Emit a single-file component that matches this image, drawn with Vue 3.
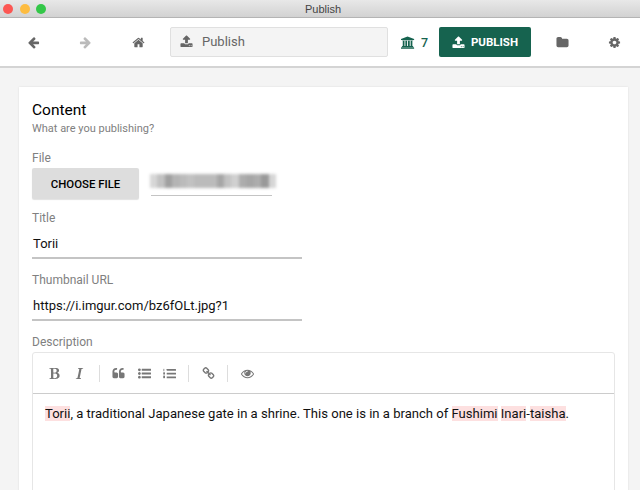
<template>
  <div class="window">
    <div class="titlebar">
      <div class="lights">
        <span class="light red"></span>
        <span class="light yellow"></span>
        <span class="light green"></span>
      </div>
      <span class="window-title">Publish</span>
    </div>

    <header class="toolbar">
      <button class="nav-btn">
        <svg class="icon" viewBox="0 0 1792 1792"><path :d="icons.left" /></svg>
      </button>
      <button class="nav-btn faded">
        <svg class="icon" viewBox="0 0 1792 1792"><path :d="icons.right" /></svg>
      </button>
      <button class="nav-btn">
        <svg class="icon" viewBox="0 0 1792 1792"><path :d="icons.home" /></svg>
      </button>
      <div class="address">
        <svg class="icon" viewBox="0 0 1792 1792"><path :d="icons.upload" /></svg>
        <span>Publish</span>
      </div>
      <div class="credits">
        <svg class="bank" viewBox="0 0 2048 1792"><path :d="icons.bank" /></svg>
        <span>7</span>
      </div>
      <button class="publish-btn">
        <svg class="icon" viewBox="0 0 1792 1792"><path :d="icons.upload" /></svg>
        <span>PUBLISH</span>
      </button>
      <button class="nav-btn folder">
        <svg class="icon" viewBox="0 0 1792 1792"><path :d="icons.folder" /></svg>
      </button>
      <button class="nav-btn settings">
        <svg class="icon" viewBox="0 0 1792 1792"><path :d="icons.cog" /></svg>
      </button>
    </header>

    <main class="page">
      <section class="card">
        <h2>Content</h2>
        <p class="subtitle">What are you publishing?</p>

        <label class="label file-label">File</label>
        <div class="file-row">
          <button class="choose-btn">CHOOSE FILE</button>
          <div class="file-name">
            <div class="blur-row">
              <i v-for="(o, n) in blurCells" :key="n" :style="{ opacity: o }"></i>
            </div>
          </div>
        </div>

        <label class="label">Title</label>
        <div class="input">Torii</div>

        <label class="label">Thumbnail URL</label>
        <div class="input">https://i.imgur.com/bz6fOLt.jpg?1</div>

        <label class="label">Description</label>
        <div class="editor">
          <div class="editor-tools">
            <svg class="tool" viewBox="0 0 1792 1792"><path :d="icons.bold" /></svg>
            <svg class="tool" viewBox="0 0 1792 1792"><path :d="icons.italic" /></svg>
            <span class="sep"></span>
            <svg class="tool" viewBox="0 0 1792 1792"><path :d="icons.quote" /></svg>
            <svg class="tool" viewBox="0 0 1792 1792"><path :d="icons.ul" /></svg>
            <svg class="tool" viewBox="0 0 1792 1792">
              <rect x="64" y="256" width="110" height="330" />
              <rect x="32" y="736" width="240" height="300" />
              <rect x="32" y="1190" width="240" height="350" />
              <rect x="512" y="288" width="1280" height="224" rx="30" />
              <rect x="512" y="800" width="1280" height="224" rx="30" />
              <rect x="512" y="1312" width="1280" height="224" rx="30" />
            </svg>
            <span class="sep"></span>
            <svg class="tool" viewBox="0 0 1792 1792"><path :d="icons.link" /></svg>
            <span class="sep"></span>
            <svg class="tool" viewBox="0 0 1792 1792"><path :d="icons.eye" /></svg>
          </div>
          <div class="editor-body">
            <mark>Torii</mark>, a traditional Japanese gate in a shrine. This one is in a branch of
            <mark>Fushimi</mark> <mark>Inari</mark>-<mark>taisha</mark>.
          </div>
        </div>
      </section>
    </main>
  </div>
</template>

<script setup>
const blurCells = [
  0.3, 0.45, 0.7, 0.55, 0.5, 0.45, 0.5, 0.5, 0.5, 0.65, 0.45, 0.35, 0.6, 0.65, 0.6, 0.75, 0.3,
];

const icons = {
  left: "M1664 896v128q0 53-32.500 90.500t-84.500 37.500h-704l293 294q38 36 38 90t-38 90l-75 76q-37 37-90 37-52 0-91-37l-651-652q-37-37-37-90 0-52 37-91l651-650q38-38 91-38 52 0 90 38l75 74q38 38 38 91t-38 91l-293 293h704q52 0 84.500 37.500t32.500 90.500z",
  right: "M1600 960q0 54-37 91l-651 651q-39 37-91 37-51 0-90-37l-75-75q-38-38-38-91t38-91l293-293h-704q-52 0-84.500-37.500t-32.500-90.500v-128q0-53 32.500-90.500t84.500-37.500h704l-293-294q-38-36-38-90t38-90l75-75q38-38 90-38 53 0 91 38l651 651q37 35 37 90z",
  home: "M1472 992v480q0 26-19 45t-45 19h-384v-384h-256v384h-384q-26 0-45-19t-19-45v-480q0-1 .5-3t.5-3l575-474 575 474q1 2 1 6zm223-69l-62 74q-8 9-21 11h-3q-13 0-21-7l-692-577-692 577q-12 8-24 7-13-2-21-11l-62-74q-8-10-7-23.500t11-21.500l719-599q32-26 76-26t76 26l244 204v-195q0-14 9-23t23-9h192q14 0 23 9t9 23v408l219 182q10 8 11 21.500t-7 23.500z",
  upload: "M1344 1472q0-26-19-45t-45-19-45 19-19 45 19 45 45 19 45-19 19-45zm256 0q0-26-19-45t-45-19-45 19-19 45 19 45 45 19 45-19 19-45zm128-224v320q0 40-28 68t-68 28h-1472q-40 0-68-28t-28-68v-320q0-40 28-68t68-28h427q21 56 70.500 92t110.500 36h256q61 0 110.500-36t70.500-92h427q40 0 68 28t28 68zm-325-648q-17 40-59 40h-256v448q0 26-19 45t-45 19h-256q-26 0-45-19t-19-45v-448h-256q-42 0-59-40-17-39 14-69l448-448q18-19 45-19t45 19l448 448q31 30 14 69z",
  bank: "M960 0l960 384v128h-128q0 26-20.500 45t-48.500 19h-1526q-28 0-48.500-19t-20.500-45h-128v-128zm-704 640h256v768h128v-768h256v768h128v-768h256v768h128v-768h256v768h59q28 0 48.500 19t20.500 45v64h-1664v-64q0-26 20.500-45t48.500-19h59v-768zm1595 960q28 0 48.500 19t20.500 45v128h-1920v-128q0-26 20.500-45t48.500-19h1782z",
  folder: "M1728 608v704q0 92-66 158t-158 66h-1216q-92 0-158-66t-66-158v-960q0-92 66-158t158-66h320q92 0 158 66t66 158v32h672q92 0 158 66t66 158z",
  cog: "M1152 896q0-106-75-181t-181-75-181 75-75 181 75 181 181 75 181-75 75-181zm512-109v222q0 12-8 23t-20 13l-185 28q-19 54-39 91 35 50 107 138 10 12 10 25t-9 23q-27 37-99 108t-94 71q-12 0-26-9l-138-108q-44 23-91 38-16 136-29 186-7 28-36 28h-222q-14 0-24.500-8.500t-11.500-21.500l-28-184q-49-16-90-37l-141 107q-10 9-25 9-14 0-25-11-126-114-165-168-7-10-7-23 0-12 8-23 15-21 51-66.500t54-70.500q-27-50-41-99l-183-27q-13-2-21-12.500t-8-23.500v-222q0-12 8-23t19-13l186-28q14-46 39-92-40-57-107-138-10-12-10-24 0-10 9-23 26-36 98.500-107.500t94.500-71.500q13 0 26 10l138 107q44-23 91-38 16-136 29-186 7-28 36-28h222q14 0 24.500 8.500t11.500 21.500l28 184q49 16 90 37l142-107q9-9 24-9 13 0 25 10 129 119 165 170 7 8 7 22 0 12-8 23-15 21-51 66.500t-54 70.500q26 50 41 98l183 28q13 2 21 12.500t8 23.500z",
  bold: "M747 1521q74 32 140 32 376 0 376-335 0-114-41-180-27-44-61.500-74t-67.500-46.500-80.500-25-84-10.500-94.500-2q-73 0-101 10 0 53-.5 159t-.5 158q0 8-1 67.500t-.5 96.500 4.500 83.500 12 66.500zm-14-746q42 7 109 7 82 0 143-13t110-44.500 74.500-89.500 25.500-142q0-70-29-122.500t-79-82-108-43.500-124-14q-50 0-130 13 0 50 4 151t4 152q0 27-.5 80t-.5 79q0 46 1 69zm-541 889l2-94q15-4 85-16t106-27q7-12 12.500-27t8.500-33.500 5.500-32.500 3-37.500.5-34v-65.500q0-982-22-1025-4-8-22-14.500t-44.500-11-49.500-7-48.500-4.500-30.500-3l-4-83q98-2 340-11.500t373-9.500q23 0 68 .5t68 .5q70 0 136.500 13t128.500 42 108 71 74 104.500 28 137.500q0 52-16.500 95.500t-39 72-64.500 57.500-73 45-84 40q154 35 256.500 134t102.500 248q0 100-35 179.500t-93.500 130.500-138 85.500-163.500 48.500-176 14q-44 0-132-3t-132-3q-106 0-307 11t-231 12z",
  italic: "M384 1662l17-85q6-2 81.500-21.500t111.500-37.500q28-35 41-101 1-7 62-289t114-543.500 52-296.500v-25q-24-13-54.500-18.500t-69.500-8-58-5.500l19-103q33 2 120 6.500t149.500 7 120.500 2.500q48 0 98.500-2.500t121-7 98.500-6.500q-5 39-19 89-30 10-101.500 28.500t-108.500 33.500q-8 19-14 42.500t-9 40-7.500 45.500-6.500 42q-27 148-87.500 419.500t-77.500 355.500q-2 9-13 58t-20 90-16 83.500-6 57.500l1 18q17 4 185 31-3 44-16 99-11 0-32.500 1.500t-32.500 1.500q-29 0-87-10t-86-10q-138-2-206-2-51 0-143 9t-121 11z",
  quote: "M832 960v384q0 80-56 136t-136 56h-384q-80 0-136-56t-56-136v-704q0-104 40.500-198.500t109.500-163.500 163.500-109.500 198.500-40.500h64q26 0 45 19t19 45v128q0 26-19 45t-45 19h-64q-106 0-181 75t-75 181v32q0 40 28 68t68 28h224q80 0 136 56t56 136zm896 0v384q0 80-56 136t-136 56h-384q-80 0-136-56t-56-136v-704q0-104 40.500-198.500t109.500-163.500 163.500-109.500 198.500-40.500h64q26 0 45 19t19 45v128q0 26-19 45t-45 19h-64q-106 0-181 75t-75 181v32q0 40 28 68t68 28h224q80 0 136 56t56 136z",
  ul: "M384 1408q0 80-56 136t-136 56-136-56-56-136 56-136 136-56 136 56 56 136zm0-512q0 80-56 136t-136 56-136-56-56-136 56-136 136-56 136 56 56 136zm1408 416v192q0 13-9.500 22.500t-22.500 9.500h-1216q-13 0-22.500-9.500t-9.500-22.500v-192q0-13 9.500-22.500t22.500-9.500h1216q13 0 22.500 9.500t9.500 22.500zm-1408-928q0 80-56 136t-136 56-136-56-56-136 56-136 136-56 136 56 56 136zm1408 416v192q0 13-9.500 22.500t-22.500 9.500h-1216q-13 0-22.500-9.500t-9.500-22.500v-192q0-13 9.500-22.500t22.500-9.500h1216q13 0 22.500 9.500t9.500 22.500zm0-512v192q0 13-9.500 22.500t-22.500 9.500h-1216q-13 0-22.500-9.500t-9.500-22.500v-192q0-13 9.500-22.500t22.500-9.500h1216q13 0 22.500 9.500t9.500 22.500z",
  link: "M1520 1216q0-40-28-68l-208-208q-28-28-68-28-42 0-72 32 3 3 19 18.500t21.500 21.500 15 19 13 25.500 3.500 27.500q0 40-28 68t-68 28q-15 0-27.500-3.500t-25.500-13-19-15-21.500-21.500-18.500-19q-33 31-33 73 0 40 28 68l206 207q27 27 68 27 40 0 68-26l147-146q28-28 28-67zm-703-705q0-40-28-68l-206-207q-28-28-68-28-39 0-68 27l-147 146q-28 28-28 67 0 40 28 68l208 208q27 27 68 27 42 0 72-31-3-3-19-18.500t-21.500-21.500-15-19-13-25.500-3.500-27.500q0-40 28-68t68-28q15 0 27.500 3.500t25.500 13 19 15 21.500 21.500 18.500 19q33-31 33-73zm895 705q0 120-85 203l-147 146q-83 83-203 83-121 0-204-85l-206-207q-83-83-83-203 0-123 88-209l-88-88q-86 88-208 88-120 0-204-84l-208-208q-84-84-84-204t85-203l147-146q83-83 203-83 121 0 204 85l206 207q83 83 83 203 0 123-88 209l88 88q86-88 208-88 120 0 204 84l208 208q84 84 84 204z",
  eye: "M1664 960q-152-236-381-353 61 104 61 225 0 185-131.500 316.500t-316.500 131.500-316.500-131.500-131.500-316.500q0-121 61-225-229 117-381 353 133 205 333.500 326.500t434.500 121.500 434.500-121.500 333.500-326.500zm-720-384q0-20-14-34t-34-14q-125 0-214.500 89.500t-89.500 214.500q0 20 14 34t34 14 34-14 14-34q0-86 61-147t147-61q20 0 34-14t14-34zm848 384q0 34-20 69-140 230-376.500 368.500t-499.500 138.500-499.500-139-376.500-368q-20-35-20-69t20-69q140-229 376.500-368t499.500-139 499.500 139 376.500 368q20 35 20 69z",
};
</script>

<style>
html,
body {
  margin: 0;
  height: 490px;
  overflow: hidden;
}
</style>

<style scoped>
* {
  box-sizing: border-box;
}

.window {
  width: 640px;
  height: 490px;
  overflow: hidden;
  display: flex;
  flex-direction: column;
  background: #f4f4f4;
  font-family: Roboto, sans-serif;
  color: #000;
}

.titlebar {
  position: relative;
  height: 18px;
  flex: none;
  display: flex;
  align-items: center;
  justify-content: center;
  padding-left: 6px;
  background: linear-gradient(#e8e8e8, #d2d2d2);
  border-bottom: 1px solid #b4b4b4;
}

.lights {
  position: absolute;
  left: 3px;
  top: 4px;
  display: flex;
  gap: 6.5px;
}

.light {
  width: 10px;
  height: 10px;
  border-radius: 50%;
}

.red {
  background: #fc5753;
}

.yellow {
  background: #fdbc40;
}

.green {
  background: #33c748;
}

.window-title {
  font-family: "Liberation Sans", sans-serif;
  font-size: 11px;
  color: #444;
}

.toolbar {
  height: 50px;
  flex: none;
  display: flex;
  align-items: center;
  padding-left: 7px;
  background: #fff;
  border-bottom: 2px solid #d4d4d4;
}

button {
  border: 0;
  padding: 0;
  background: none;
  font-family: inherit;
}

.nav-btn {
  width: 52.5px;
  height: 30px;
  flex: none;
  display: flex;
  align-items: center;
  justify-content: center;
  color: #666;
}

.settings {
  width: 51px;
}

.faded {
  color: #bbb;
}

.icon {
  width: 13px;
  height: 13px;
  fill: currentColor;
  flex: none;
}

.address {
  width: 218px;
  height: 30px;
  flex: none;
  margin-left: 5.5px;
  padding: 0 0 1px 9px;
  display: flex;
  align-items: center;
  gap: 9px;
  background: #f4f4f4;
  border: 1px solid #e0e0e0;
  border-radius: 2px;
  color: #666;
  font-size: 13px;
}

.credits {
  margin-left: 13px;
  width: 38px;
  flex: none;
  display: flex;
  align-items: center;
  gap: 6px;
  color: #16634f;
  font-size: 12.5px;
  font-weight: 500;
}

.bank {
  width: 14px;
  height: 13px;
  fill: currentColor;
  flex: none;
}

.publish-btn {
  width: 92px;
  height: 30px;
  flex: none;
  display: flex;
  align-items: center;
  justify-content: center;
  gap: 6px;
  background: #16634f;
  border-radius: 2px;
  color: #fff;
  font-size: 11.5px;
  font-weight: 700;
}

.folder {
  margin-left: 5px;
}

.page {
  flex: 1;
  padding: 19px 12px 0 19px;
}

.card {
  height: 420px;
  padding: 14px 13px 0;
  background: #fff;
  box-shadow: 0 0 2px rgba(0, 0, 0, 0.1);
}

h2 {
  margin: 0;
  font-size: 15.5px;
  font-weight: 400;
  line-height: 18px;
}

.subtitle {
  margin: 3px 0 0;
  font-size: 11px;
  line-height: 14px;
  color: #808080;
}

.label {
  display: block;
  margin-top: 14px;
  font-size: 12px;
  line-height: 15px;
  color: #808080;
}

.file-label {
  margin-top: 15px;
}

.file-row {
  display: flex;
  gap: 12px;
  margin-top: 2px;
}

.file-row + .label {
  margin-top: 12px;
}

.choose-btn {
  width: 107px;
  height: 31px;
  background: #ddd;
  border-radius: 2px;
  box-shadow: 0 1px 1px rgba(0, 0, 0, 0.12);
  color: #000;
  font-size: 11.4px;
  font-weight: 500;
}

.file-name {
  width: 121px;
  height: 28px;
  padding-top: 6px;
  border-bottom: 1px solid #c4c4c4;
}

.blur-row {
  display: flex;
  width: 126px;
  height: 14px;
  margin-left: -1px;
  filter: blur(1.5px);
}

.blur-row i {
  flex: 1;
  background: #777;
}

.input {
  width: 270px;
  height: 33px;
  padding: 8px 0 0 1px;
  border-bottom: 2px solid #c4c4c4;
  font-size: 13px;
  line-height: 20px;
  color: #111;
}

.editor {
  margin-top: 2px;
  width: 583px;
  height: 200px;
  background: #fff;
  border: 1px solid #e6e6e6;
  border-radius: 3px;
}

.editor-tools {
  height: 41px;
  padding-left: 15px;
  display: flex;
  align-items: center;
  gap: 12.4px;
  border-bottom: 1px solid #ccc;
  color: #777;
}

.tool {
  width: 13px;
  height: 13px;
  fill: currentColor;
  flex: none;
}

.sep {
  width: 1px;
  height: 17px;
  background: #ddd;
}

.editor-body {
  padding: 10px 12px;
  font-size: 13.07px;
  line-height: 20px;
  color: #111;
}

mark {
  background: #fde0e0;
  color: inherit;
}
</style>
